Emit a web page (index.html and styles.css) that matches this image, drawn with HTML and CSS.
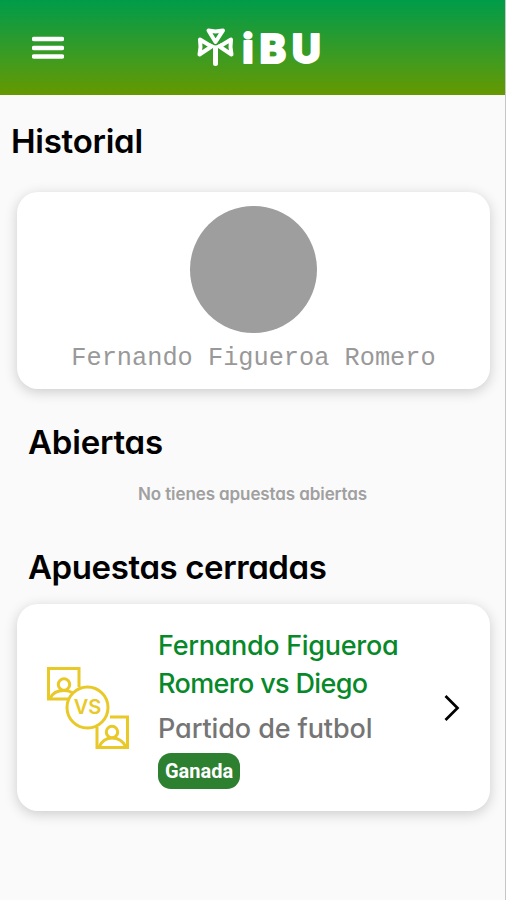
FILE: index.html
```html
<!DOCTYPE html>
<html lang="es">
<head>
<meta charset="utf-8">
<title>Historial</title>
<link rel="stylesheet" href="styles.css">
</head>
<body>
<header class="topbar">
  <svg class="menu" viewBox="0 0 32 24"><path d="M2 3H30M2 12H30M2 20.500H30" fill="none" stroke="#fff" stroke-width="4.4" stroke-linecap="round"/></svg>
  <svg class="logo" viewBox="0 0 130 44" fill="none" stroke="#fff" stroke-linejoin="round">
    <g stroke-width="4">
      <path d="M19.500 16L12.500 4.500L19.500 5.500L27 4.500Z"/>
      <path d="M15.500 20.500L4 13.500L4.500 21L3.500 28.500Z"/>
      <path d="M23.500 20.500L35 13.500L34.500 21L35.500 28.500Z"/>
      <path d="M13 18L19.500 21L26 18" stroke-width="2"/>
      <path d="M19.500 22V37.500" stroke-width="5" stroke-linecap="round"/>
    </g>
    <text class="wordmark" x="46.200 63.500 95.800" y="37.200">iBU</text>
  </svg>
</header>
<main>
  <h1 class="title">Historial</h1>
  <section class="card profile">
    <div class="avatar"></div>
    <p class="name">Fernando Figueroa Romero</p>
  </section>
  <h2 class="subtitle open">Abiertas</h2>
  <p class="empty">No tienes apuestas abiertas</p>
  <h2 class="subtitle closed">Apuestas cerradas</h2>
  <article class="card bet">
    <svg class="versus" viewBox="0 0 84 84" fill="none" stroke="#e8c928" stroke-width="3">
      <path d="M23 33H2.500V2.500H33V21M51 61V81.500H81.500V51H64"/>
      <circle cx="18" cy="18.500" r="5.700"/><path d="M4.500 32C7 26 12 24.500 18 24.500Q23 24.500 27 27"/>
      <circle cx="66" cy="66" r="5.700"/><path d="M53 81C56 74.500 60 72 66 72S77 75 80 81"/>
      <circle cx="41.500" cy="41.500" r="20.500"/>
      <text class="vs" x="41.500" y="48" text-anchor="middle">VS</text>
    </svg>
    <div class="details">
      <h3 class="match"><span class="line1">Fernando Figueroa</span><br><span class="line2">Romero vs Diego</span></h3>
      <p class="event">Partido de futbol</p>
      <span class="badge">Ganada</span>
    </div>
    <svg class="chevron" viewBox="0 0 18 28"><path d="M2.500 2L14.500 14L2.500 26" fill="none" stroke="#000" stroke-width="2.700"/></svg>
  </article>
</main>
</body>
</html>
```
FILE: styles.css
```css
* { box-sizing: border-box; }
body {
  margin: 0;
  height: 900px;
  overflow: hidden;
  background: #fafafa;
  border-right: 1px solid #c4c7c6;
  font-family: Inter, "Liberation Sans", sans-serif;
  font-feature-settings: "cv11";
}
h1, h2, h3, p { margin: 0; }
.topbar {
  height: 95px;
  margin-right: -1px;
  padding: 0 32px;
  display: flex;
  align-items: center;
  background: linear-gradient(#009c49 0%, #209b35 32%, #459b1b 68%, #669800 100%);
}
.menu { width: 32px; height: 24px; }
.logo { width: 130px; height: 44px; margin-left: 132px; overflow: visible; }
.wordmark { font: 800 40px Inter, sans-serif; fill: #fff; stroke: #fff; stroke-width: 2px; }
.title, .subtitle { font-weight: 600; font-size: 33px; line-height: 40px; color: #000; white-space: nowrap; }
.title { margin: 26px 0 31px 11px; letter-spacing: -0.25px; }
.card {
  width: 473px;
  margin-left: 17px;
  background: #fff;
  border-radius: 21px;
  box-shadow: 0 3px 13px rgba(0, 0, 0, 0.19);
}
.profile { height: 197px; padding-top: 14px; display: flex; flex-direction: column; align-items: center; }
.avatar { width: 127px; height: 127px; border-radius: 50%; background: #9e9e9e; }
.name { margin-top: 11px; font: 25.300px/30px "Liberation Mono", monospace; color: #999; white-space: nowrap; }
.subtitle { margin-left: 28px; }
.open { margin-top: 33px; letter-spacing: -0.2px; }
.empty { margin-top: 21px; text-align: center; font-size: 17px; line-height: 22px; font-weight: 600; color: #a0a0a0; letter-spacing: -0.100px; }
.closed { margin-top: 42px; letter-spacing: -0.400px; }
.bet { height: 207px; margin-top: 17px; padding: 0 29px 0 29px; display: flex; align-items: center; }
.versus { width: 84px; height: 84px; flex: none; }
.vs { font: 600 20px Inter, sans-serif; fill: #e8c928; stroke: none; }
.details { width: 270px; margin-left: 28px; padding-top: 1px; white-space: nowrap; }
.match { font-size: 27px; line-height: 38px; font-weight: 500; color: #07892a; }
.line1 { letter-spacing: -0.3px; }
.line2 { letter-spacing: -0.65px; }
.event { margin-top: 7px; font-size: 27px; line-height: 38px; font-weight: 500; color: #757575; letter-spacing: -0.1px; }
.badge {
  display: flex;
  align-items: center;
  justify-content: center;
  width: 82px;
  height: 36px;
  margin-top: 5px;
  border-radius: 13px;
  background: #2c8030;
  color: #fff;
  font: 700 20px Roboto, sans-serif;
}
.chevron { width: 18px; height: 28px; margin-left: auto; flex: none; }
```
